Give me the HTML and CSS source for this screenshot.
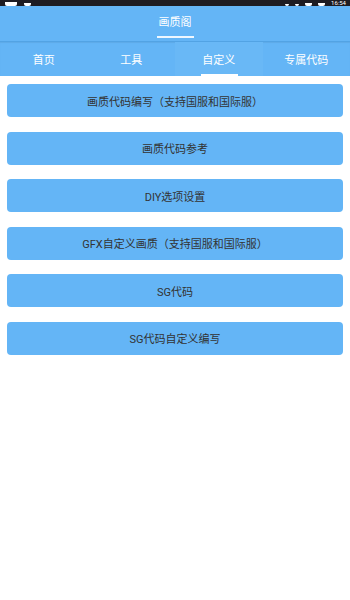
FILE: index.html
```html
<!DOCTYPE html>
<html lang="zh-CN">
<head>
    <meta charset="UTF-8">
    <meta name="viewport" content="width=device-width, initial-scale=1.0">
    <title>画质阁</title>
    <link rel="stylesheet" href="styles.css">
</head>
<body>
    <div class="status">
        <div class="status-left">
            <span class="dot wide"></span>
            <span class="dot"></span>
        </div>
        <div class="status-right">
            <span class="dot tiny"></span>
            <span class="dot tiny"></span>
            <span class="dot"></span>
            <span class="dot"></span>
            <span class="time">16:54</span>
        </div>
    </div>

    <div class="header">
        <div class="title">画质阁</div>
        <div class="title-line"></div>
    </div>

    <!-- Tabs -->
    <div class="tabs">
        <div class="tab">首页</div>
        <div class="tab">工具</div>
        <div class="tab active">自定义</div>
        <div class="tab">专属代码</div>
    </div>

    <div class="list">
        <div class="btn">画质代码编写（支持国服和国际服）</div>
        <div class="btn">画质代码参考</div>
        <div class="btn">DIY选项设置</div>
        <div class="btn">GFX自定义画质（支持国服和国际服）</div>
        <div class="btn">SG代码</div>
        <div class="btn">SG代码自定义编写</div>
    </div>
</body>
</html>
```

FILE: styles.css
```css
body {
    margin: 0;
    padding: 0;
    background-color: #fff;
    font-family: 'Roboto', 'Noto Sans CJK SC', sans-serif;
}

.status {
    height: 6px;
    background-color: #1e1c22;
    display: flex;
    justify-content: space-between;
    align-items: flex-end;
    overflow: hidden;
}

.status-left,
.status-right {
    display: flex;
    align-items: flex-end;
    gap: 7px;
}

.status-left {
    padding-left: 5px;
}

.status-right {
    padding-right: 4px;
    gap: 6px;
}

.dot {
    display: block;
    width: 7px;
    height: 3px;
    background-color: #fff;
    border-radius: 0 0 2px 2px;
}

.dot.wide {
    width: 12px;
    height: 4px;
}

.dot.tiny {
    width: 4px;
    height: 2px;
}

.time {
    color: #fff;
    font-size: 6px;
    line-height: 6px;
}

.header {
    height: 35px;
    background-color: #64b5f6;
    display: flex;
    flex-direction: column;
    align-items: center;
    justify-content: flex-end;
}

.title {
    color: #fff;
    font-size: 11px;
    line-height: 14px;
    margin-bottom: 6px;
}

.title-line {
    width: 37px;
    height: 2px;
    background-color: #eef7ff;
    margin-bottom: 3px;
}

.tabs {
    display: flex;
    height: 34px;
    background-color: #64b5f6;
    border-top: 1px solid #52a3e4;
    box-shadow: inset 0 1px 1px rgba(0, 0, 0, 0.06);
}

.tab {
    flex: 1;
    display: flex;
    align-items: center;
    justify-content: center;
    color: #fff;
    font-size: 11px;
    position: relative;
}

.tab.active {
    background-color: #69b8f6;
}

.tab.active::after {
    content: "";
    position: absolute;
    bottom: 0;
    left: 50%;
    width: 37px;
    height: 2px;
    margin-left: -18px;
    background-color: #fff;
}

.list {
    display: flex;
    flex-direction: column;
    gap: 14.6px;
    padding: 8px 7px;
}

.btn {
    height: 33px;
    background-color: #64b5f6;
    border-radius: 4px;
    display: flex;
    align-items: center;
    justify-content: center;
    color: #333;
    font-size: 11px;
}
```
